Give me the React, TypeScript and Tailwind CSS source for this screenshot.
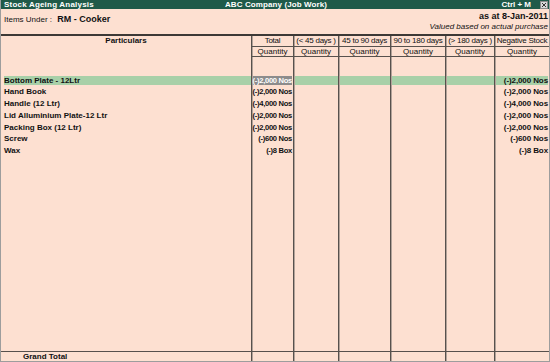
// Stock Ageing Analysis — Tally-style report screen (550x362).

const font = "font-['Liberation_Sans',Arial,sans-serif]";
const grid = 'grid grid-cols-[250px_42px_45px_52px_55px_49px_55px]';
const vline = 'border-l border-[#57514d] shadow-[inset_1px_0_0_#b3a39a]';

const buckets = ['Total', '(< 45 days )', '45 to 90 days', '90 to 180 days', '(> 180 days )', 'Negative Stock'];

const items = [
  { name: 'Bottom Plate - 12Ltr', total: '(-)2,000 Nos', neg: '(-)2,000 Nos', active: true },
  { name: 'Hand Book', total: '(-)2,000 Nos', neg: '(-)2,000 Nos' },
  { name: 'Handle (12 Ltr)', total: '(-)4,000 Nos', neg: '(-)4,000 Nos' },
  { name: 'Lid Alluminium Plate-12 Ltr', total: '(-)2,000 Nos', neg: '(-)2,000 Nos' },
  { name: 'Packing Box (12 Ltr)', total: '(-)2,000 Nos', neg: '(-)2,000 Nos' },
  { name: 'Screw', total: '(-)600 Nos', neg: '(-)600 Nos' },
  { name: 'Wax', total: '(-)8 Box', neg: '(-)8 Box' },
];

function EmptyRow({ className = '' }: { className?: string }) {
  return (
    <div className={`${grid} ${className}`}>
      <div />
      {buckets.map((b) => (
        <div key={b} className={vline} />
      ))}
    </div>
  );
}

function ItemRow({ item }: { item: (typeof items)[number] }) {
  // highlighted row: band is a little shorter than the row pitch
  const band = item.active ? 'bg-[#a8d0a8] bg-clip-content pt-[2px] pb-[1px]' : '';
  return (
    <div className={`${grid} h-[11.8px] text-[8px] font-bold leading-[9px]`}>
      <div className={`${band} flex items-center pl-[3px] whitespace-nowrap`}>{item.name}</div>
      <div className={`${vline} ${item.active ? 'bg-[#8c8c8c] bg-clip-content pt-[2px] pb-[1px] text-white' : ''} flex items-center justify-end pr-[1px] whitespace-nowrap text-[7.6px] tracking-[-0.3px] overflow-hidden`}>
        {item.total}
      </div>
      <div className={`${vline} ${band}`} />
      <div className={`${vline} ${band}`} />
      <div className={`${vline} ${band}`} />
      <div className={`${vline} ${band}`} />
      <div className={`${vline} ${band} flex items-center justify-end pr-[1px] whitespace-nowrap tracking-[-0.1px]`}>
        {item.neg}
      </div>
    </div>
  );
}

export default function App() {
  return (
    <div className={`${font} w-[550px] h-[362px] flex flex-col bg-[#fde0d1] text-[#111] border-x border-b border-[#9d9d9d] overflow-hidden`}>
      {/* Title bar */}
      <div className="h-[9px] bg-[#1f5a49] text-white text-[8px] font-bold leading-[9px] flex items-center pl-[3px] pr-[1px]">
        <div className="flex-1 tracking-[0.2px]">Stock Ageing Analysis</div>
        <div className="tracking-[0.1px]">ABC Company (Job Work)</div>
        <div className="flex-1 flex justify-end items-center gap-[9px]">
          <span>Ctrl + M</span>
          <svg viewBox="0 0 8 8" className="w-[8px] h-[8px]">
            <rect x="0.5" y="0.5" width="7" height="7" fill="#d9d9d9" stroke="#8a8a8a" />
            <path d="M2 2l4 4M6 2l-4 4" stroke="#333" strokeWidth="1" />
          </svg>
        </div>
      </div>

      {/* Report info */}
      <div className="h-[25px] flex justify-between pl-[3px] pr-[1px]">
        <div className="pt-[3px] leading-[10px] whitespace-nowrap">
          <span className="text-[8px]">Items Under : </span>
          <span className="text-[9px] font-bold ml-[3px]">RM - Cooker</span>
        </div>
        <div className="flex flex-col items-end pt-[2px] leading-[10px] whitespace-nowrap">
          <span className="text-[9px] font-bold">as at 8-Jan-2011</span>
          <span className="text-[8px] italic mt-[1px]">Valued based on actual purchase</span>
        </div>
      </div>
      <div className="h-[2px] bg-[#3d3936]" />

      {/* Column headings */}
      <div className={`${grid} text-[8px] leading-[10px]`}>
        <div className="row-span-2 text-center font-bold">Particulars</div>
        {buckets.map((b) => (
          <div key={b} className={`${vline} h-[11px] border-b border-b-[#57514d] text-center whitespace-nowrap tracking-[-0.25px] overflow-hidden`}>
            {b}
          </div>
        ))}
        {buckets.map((b) => (
          <div key={b + 'q'} className={`${vline} h-[10px] border-b border-b-[#57514d] text-center leading-[9px]`}>
            Quantity
          </div>
        ))}
      </div>

      {/* Body */}
      <EmptyRow className="h-[17px]" />
      {items.map((it) => (
        <ItemRow key={it.name} item={it} />
      ))}
      <EmptyRow className="flex-1" />

      {/* Grand total */}
      <div className={`${grid} h-[10px] border-t border-[#57514d] text-[8px] font-bold leading-[9px]`}>
        <div className="pl-[22px]">Grand Total</div>
        {buckets.map((b) => (
          <div key={b} className={vline} />
        ))}
      </div>
    </div>
  );
}
